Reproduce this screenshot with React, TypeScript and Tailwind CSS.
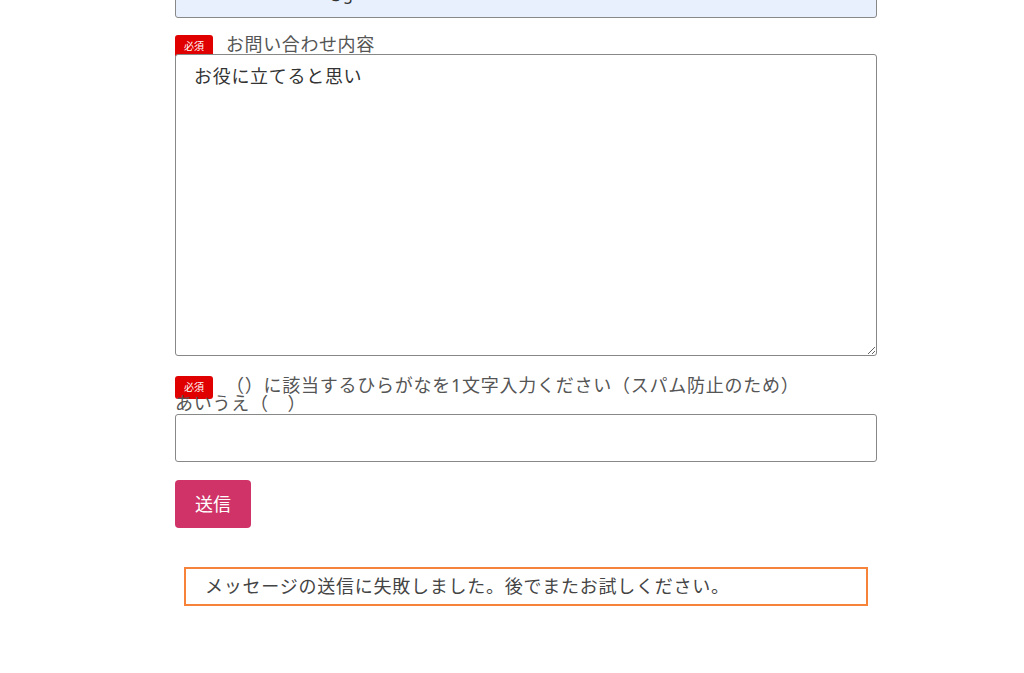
const Badge = () => (
  <span className="inline-block align-top h-[23px] mb-[-5px] w-[38px] mr-[13px] rounded-[3px] bg-[#e00000] text-white text-[10px] leading-[23px] text-center tracking-normal">
    必須
  </span>
)

export default function App() {
  return (
    <div
      className="w-[1024px] h-[673px] overflow-hidden bg-white text-[#333]"
      style={{ fontFamily: '"Noto Sans", "Noto Sans CJK JP", sans-serif' }}
    >
      <div className="ml-[175px] w-[702px] flex flex-col">
        <input
          className="h-[48px] -mt-[30px] w-full rounded-[3px] border border-[#888] bg-[#e8f0fe] px-[18px] text-[16px] text-[#333] outline-none"
          defaultValue="sakuramochi.toko@gmail.com"
        />

        <div className="mt-[17px] text-[18px] tracking-[0.6px] leading-[18px] text-[#555]">
          <Badge />
          お問い合わせ内容
        </div>
        <textarea
          className="relative mt-[1px] h-[302px] w-full rounded-[3px] border border-[#888] bg-white px-[18px] pt-[9px] text-[18px] tracking-[0.7px] leading-[24px] text-[#333] outline-none"
          defaultValue="お役に立てると思い"
        />

        <div className="mt-[20px] text-[18px] tracking-[0.75px] leading-[18px] text-[#555]">
          <Badge />
          （）に該当するひらがなを1文字入力ください（スパム防止のため）
          <br />
          あいうえ（　）
        </div>
        <input className="relative mt-[2px] h-[48px] w-full rounded-[3px] border border-[#888] bg-white px-[18px] text-[16px] outline-none" />

        <div className="mt-[18px]">
          <button className="h-[48px] w-[76px] rounded-[4px] bg-[#cf3368] text-[18px] text-white">
            送信
          </button>
        </div>

        <div className="mt-[39px] mx-[9px] h-[39px] border-2 border-[#f7823a] flex items-center pl-[19px] text-[18px] tracking-[0.75px] text-[#444]">
          メッセージの送信に失敗しました。後でまたお試しください。
        </div>
      </div>
    </div>
  )
}
